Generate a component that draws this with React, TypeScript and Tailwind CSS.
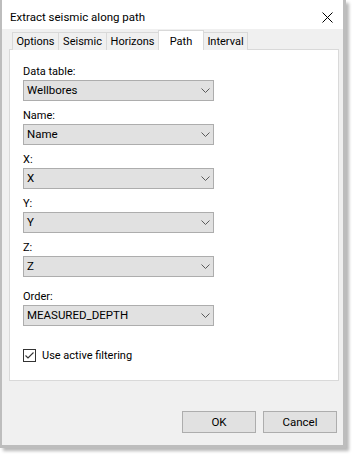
import React from 'react';

const tabs = [
  { label: 'Options', w: 'w-[47px]' },
  { label: 'Seismic', w: 'w-[49px]' },
  { label: 'Horizons', w: 'w-[53px]' },
  { label: 'Path', w: 'w-[46px]', active: true },
  { label: 'Interval', w: 'w-[45px]' },
];

const fields = [
  { label: 'Data table:', value: 'Wellbores' },
  { label: 'Name:', value: 'Name' },
  { label: 'X:', value: 'X' },
  { label: 'Y:', value: 'Y' },
  { label: 'Z:', value: 'Z' },
];

const Chevron = () => (
  <svg width="9" height="5" viewBox="0 0 9 5" className="shrink-0">
    <path d="M0.5 0.5 L4.5 4.5 L8.5 0.5" fill="none" stroke="#5a5a5a" strokeWidth="1" />
  </svg>
);

const Combo = ({ value }: { value: string }) => (
  <div className="flex h-[21px] w-[191px] items-center justify-between border border-[#adadad] bg-[#e1e1e1] pl-[3px] pr-[3px] text-[11.5px]">
    <span className="leading-[15px]">{value}</span>
    <Chevron />
  </div>
);

export default function App() {
  return (
    <div
      className="relative h-[456px] w-[355px] bg-white text-[11px] text-black"
      style={{ fontFamily: 'Roboto, "Liberation Sans", sans-serif' }}
    >
      <div className="flex h-[448px] w-[346px] flex-col border-b-[3px] border-l-[2px] border-r-[3px] border-[#bdbdbd] bg-[#f0f0f0] shadow-[3px_3px_3px_rgba(0,0,0,0.28)]">
        {/* title bar */}
        <div className="flex h-[29px] shrink-0 items-start justify-between bg-white">
          <span className="ml-[8px] mt-[10px] text-[11.5px] leading-[15px]">Extract seismic along path</span>
          <svg width="11" height="11" viewBox="0 0 11 11" className="mr-[10px] mt-[12px]">
            <path d="M0.5 0.5 L10.5 10.5 M10.5 0.5 L0.5 10.5" stroke="#000" strokeWidth="1" />
          </svg>
        </div>

        {/* tabs */}
        <div className="ml-[7px] mr-[4px] mt-[1px] flex flex-col">
          <div className="relative z-10 -mb-px ml-[3px] flex h-[20px] items-end">
            {tabs.map((t, i) => (
              <div
                key={t.label}
                className={
                  t.active
                    ? `${t.w} -ml-px flex h-[20px] items-start justify-center border border-b-0 border-[#d9d9d9] bg-white pt-[3px] leading-[15px]`
                    : `${t.w} ${i === 0 ? '' : '-ml-px'} flex h-[18px] items-center justify-center border border-b-0 border-[#d9d9d9] bg-[#f0f0f0] leading-[15px]`
                }
              >
                {t.label}
              </div>
            ))}
          </div>
          <div className="flex h-[332px] flex-col border border-[#d9d9d9] bg-white pl-[13px] pt-[14px]">
            {fields.map((f) => (
              <div key={f.label} className="mb-[7px] flex flex-col gap-px">
                <span className="leading-[15px]">{f.label}</span>
                <Combo value={f.value} />
              </div>
            ))}
            <div className="mt-[5px] flex flex-col gap-px">
              <span className="leading-[15px]">Order:</span>
              <Combo value="MEASURED_DEPTH" />
            </div>
            <label className="mt-[22px] flex items-center gap-[6px]">
              <span className="flex h-[13px] w-[13px] items-center justify-center border border-[#333333] bg-white">
                <svg width="11" height="11" viewBox="0 0 11 11">
                  <path d="M1.5 5.5 L4 8 L9.5 2.5" fill="none" stroke="#333333" strokeWidth="1.1" />
                </svg>
              </span>
              <span className="leading-[15px]">Use active filtering</span>
            </label>
          </div>
        </div>

        {/* buttons */}
        <div className="mr-[6px] mt-auto mb-[12px] flex justify-end gap-[7px] text-[11.5px]">
          <button className="h-[22px] w-[74px] border border-[#adadad] bg-[#e1e1e1] leading-[15px]">OK</button>
          <button className="h-[22px] w-[74px] border border-[#adadad] bg-[#e1e1e1] leading-[15px]">Cancel</button>
        </div>
      </div>
    </div>
  );
}
